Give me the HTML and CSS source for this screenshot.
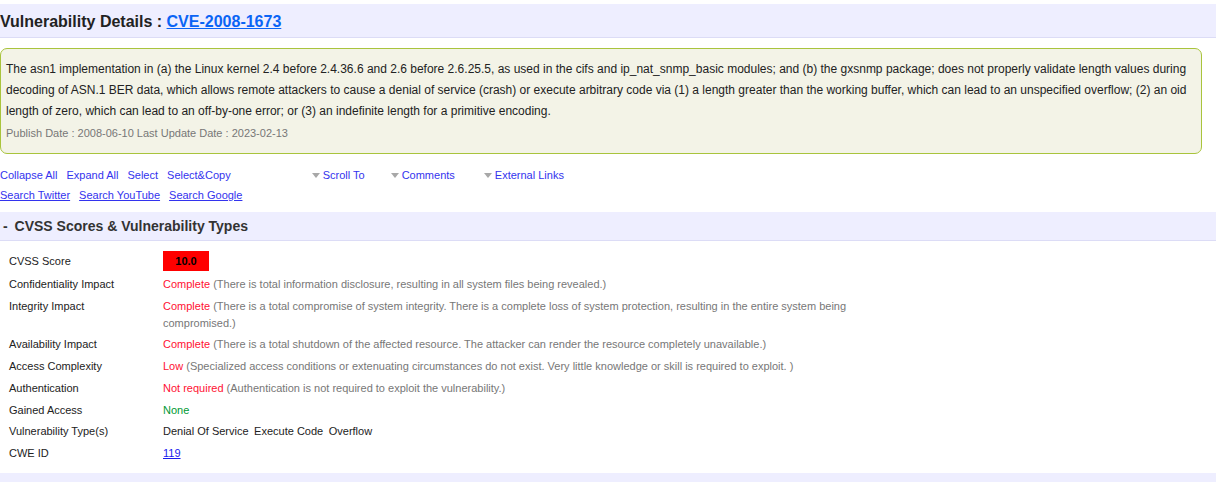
FILE: index.html
```html
<!DOCTYPE html>
<html lang="en">
<head>
<meta charset="utf-8">
<title>CVE-2008-1673</title>
<link rel="stylesheet" href="styles.css">
</head>
<body>
<div class="page">
  <h1 class="title-bar">Vulnerability Details : <a class="cve-link" href="#">CVE-2008-1673</a></h1>

  <div class="summary">
    <p class="summary-text">The asn1 implementation in (a) the Linux kernel 2.4 before 2.4.36.6 and 2.6 before 2.6.25.5, as used in the cifs and ip_nat_snmp_basic modules; and (b) the gxsnmp package; does not properly validate length values during decoding of ASN.1 BER data, which allows remote attackers to cause a denial of service (crash) or execute arbitrary code via (1) a length greater than the working buffer, which can lead to an unspecified overflow; (2) an oid length of zero, which can lead to an off-by-one error; or (3) an indefinite length for a primitive encoding.</p>
    <div class="dates">Publish Date : 2008-06-10 Last Update Date : 2023-02-13</div>
  </div>

  <div class="toolbar">
    <div class="tool-row">
      <span class="tool">Collapse All</span>
      <span class="tool">Expand All</span>
      <span class="tool">Select</span>
      <span class="tool">Select&amp;Copy</span>
      <span class="menu menu-scroll"><span class="tri"></span>Scroll To</span>
      <span class="menu menu-comments"><span class="tri"></span>Comments</span>
      <span class="menu menu-ext"><span class="tri"></span>External Links</span>
    </div>
    <div class="tool-row">
      <a class="search" href="#">Search Twitter</a>
      <a class="search" href="#">Search YouTube</a>
      <a class="search" href="#">Search Google</a>
    </div>
  </div>

  <h2 class="section-bar"><span class="toggle">-</span> CVSS Scores &amp; Vulnerability Types</h2>

  <div class="details">
    <div class="row row-score">
      <div class="label">CVSS Score</div>
      <div class="value"><span class="score">10.0</span></div>
    </div>
    <div class="row">
      <div class="label">Confidentiality Impact</div>
      <div class="value"><span class="bad">Complete</span> <span class="note">(There is total information disclosure, resulting in all system files being revealed.)</span></div>
    </div>
    <div class="row">
      <div class="label">Integrity Impact</div>
      <div class="value"><span class="bad">Complete</span> <span class="note">(There is a total compromise of system integrity. There is a complete loss of system protection, resulting in the entire system being compromised.)</span></div>
    </div>
    <div class="row">
      <div class="label">Availability Impact</div>
      <div class="value"><span class="bad">Complete</span> <span class="note">(There is a total shutdown of the affected resource. The attacker can render the resource completely unavailable.)</span></div>
    </div>
    <div class="row">
      <div class="label">Access Complexity</div>
      <div class="value"><span class="bad">Low</span> <span class="note">(Specialized access conditions or extenuating circumstances do not exist. Very little knowledge or skill is required to exploit. )</span></div>
    </div>
    <div class="row">
      <div class="label">Authentication</div>
      <div class="value"><span class="bad">Not required</span> <span class="note">(Authentication is not required to exploit the vulnerability.)</span></div>
    </div>
    <div class="row">
      <div class="label">Gained Access</div>
      <div class="value"><span class="good">None</span></div>
    </div>
    <div class="row">
      <div class="label">Vulnerability Type(s)</div>
      <div class="value types"><span>Denial Of Service</span><span>Execute Code</span><span>Overflow</span></div>
    </div>
    <div class="row">
      <div class="label">CWE ID</div>
      <div class="value"><a class="cwe" href="#">119</a></div>
    </div>
  </div>

  <div class="next-bar"></div>
</div>
</body>
</html>
```

FILE: styles.css
```css
html, body {
  margin: 0;
  padding: 0;
  background: #ffffff;
}

body {
  font-family: "Liberation Sans", Arial, sans-serif;
  color: #222222;
}

.page {
  width: 1216px;
}

.title-bar {
  margin: 4px 0 0 0;
  height: 31px;
  padding-top: 2px;
  line-height: 31px;
  background: #eeeeff;
  border-bottom: 1px solid #dcdcf6;
  font-size: 16px;
  font-weight: bold;
  color: #222222;
  white-space: nowrap;
}

.cve-link {
  color: #0a64f5;
  text-decoration: underline;
}

.summary {
  margin-top: 10px;
  box-sizing: border-box;
  width: 1202px;
  padding: 10px 5px 9px 5px;
  background: #f3f3e7;
  border: 1px solid #a9c43c;
  border-radius: 7px;
}

.summary-text {
  margin: 0;
  font-size: 12px;
  line-height: 21px;
  color: #222222;
}

.dates {
  margin-top: 1px;
  font-size: 11px;
  line-height: 21px;
  color: #777777;
}

.toolbar {
  margin-top: 11px;
  font-size: 11px;
}

.tool-row {
  display: flex;
  align-items: center;
  height: 20px;
  gap: 9px;
  white-space: nowrap;
}

.tool {
  color: #3333ee;
}

.menu {
  display: inline-flex;
  align-items: center;
  color: #3333ee;
}

.menu-scroll { margin-left: 72px; }
.menu-comments { margin-left: 17px; }
.menu-ext { margin-left: 20px; }

.tri {
  width: 0;
  height: 0;
  border-left: 4.5px solid transparent;
  border-right: 4.5px solid transparent;
  border-top: 5px solid #a8a8a8;
  margin-right: 3px;
  margin-top: 1px;
}

.search {
  color: #3333ee;
  text-decoration: underline;
}

.section-bar {
  margin: 7px 0 0 0;
  height: 28px;
  line-height: 28px;
  background: #eeeeff;
  border-bottom: 1px solid #dcdcf6;
  font-size: 14px;
  font-weight: bold;
  color: #333333;
  padding-left: 3px;
}

.toggle {
  font-weight: bold;
  margin-right: 3px;
}

.details {
  margin-top: 8px;
  padding-left: 9px;
  font-size: 11px;
}

.row {
  display: grid;
  grid-template-columns: 154px 720px;
  line-height: 17px;
  padding: 2.4px 0;
}

.row-score {
  padding: 2.2px 0;
  align-items: center;
}

.label {
  color: #222222;
}

.value {
  color: #222222;
}

.score {
  display: inline-block;
  width: 46px;
  height: 20px;
  line-height: 20px;
  background: #ff0000;
  color: #000000;
  font-weight: bold;
  text-align: center;
  vertical-align: top;
}

.bad {
  color: #ff1133;
}

.note {
  color: #777777;
}

.good {
  color: #009933;
}

.types {
  display: flex;
  gap: 5.5px;
}

.cwe {
  color: #1a1aee;
  text-decoration: underline;
}

.next-bar {
  margin-top: 8px;
  height: 20px;
  background: #eeeeff;
}
```
